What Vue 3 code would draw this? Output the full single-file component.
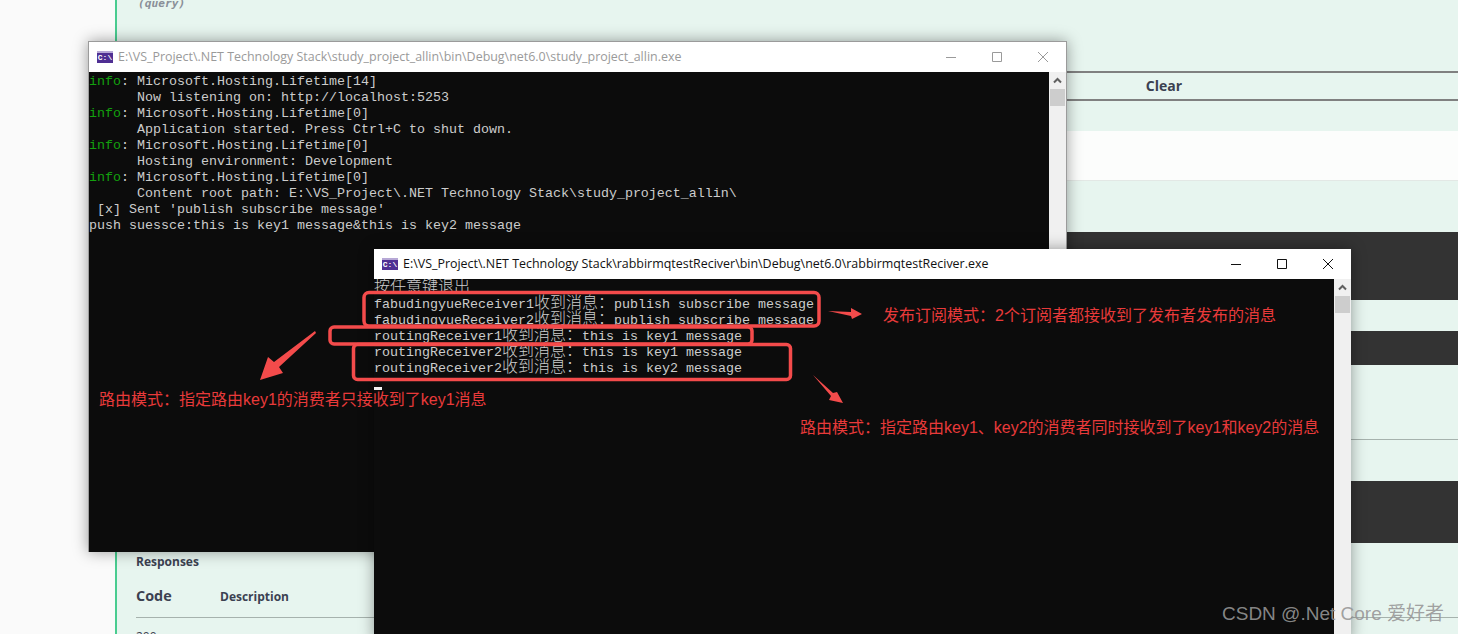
<script setup>
const splitLine = (text) =>
  text.split(/([\u3000-\u9fff\uff00-\uffef]+)/).filter(Boolean).map((t) => ({
    t,
    cjk: /[\u3000-\u9fff\uff00-\uffef]/.test(t),
  }));

const windows = [
  {
    id: 'one',
    active: false,
    title: 'E:\\VS_Project\\.NET Technology Stack\\study_project_allin\\bin\\Debug\\net6.0\\study_project_allin.exe',
    cursor: false,
    lines: [
      ['info', ': Microsoft.Hosting.Lifetime[14]'],
      ['', '      Now listening on: http://localhost:5253'],
      ['info', ': Microsoft.Hosting.Lifetime[0]'],
      ['', '      Application started. Press Ctrl+C to shut down.'],
      ['info', ': Microsoft.Hosting.Lifetime[0]'],
      ['', '      Hosting environment: Development'],
      ['info', ': Microsoft.Hosting.Lifetime[0]'],
      ['', '      Content root path: E:\\VS_Project\\.NET Technology Stack\\study_project_allin\\'],
      ['', " [x] Sent 'publish subscribe message'"],
      ['', 'push suessce:this is key1 message&this is key2 message'],
    ],
  },
  {
    id: 'two',
    active: true,
    title: 'E:\\VS_Project\\.NET Technology Stack\\rabbirmqtestReciver\\bin\\Debug\\net6.0\\rabbirmqtestReciver.exe',
    cursor: true,
    lines: [
      ['', '按任意键退出'],
      ['', 'fabudingyueReceiver1收到消息：publish subscribe message'],
      ['', 'fabudingyueReceiver2收到消息：publish subscribe message'],
      ['', 'routingReceiver1收到消息：this is key1 message'],
      ['', 'routingReceiver2收到消息：this is key1 message'],
      ['', 'routingReceiver2收到消息：this is key2 message'],
    ],
  },
].map((w) => ({
  ...w,
  lines: w.lines.map(([tag, text]) => ({ tag, parts: splitLine(text) })),
}));

const notes = [
  { id: 'a', text: '发布订阅模式：2个订阅者都接收到了发布者发布的消息' },
  { id: 'b', text: '路由模式：指定路由key1的消费者只接收到了key1消息' },
  { id: 'c', text: '路由模式：指定路由key1、key2的消费者同时接收到了key1和key2的消息' },
];
</script>

<template>
  <div class="page">
    <section class="panel">
      <div class="query-row"><span class="query">(query)</span></div>
      <div class="actions"><span class="clear">Clear</span></div>
      <div class="white-band"></div>
      <div class="dark dark-a"></div>
      <div class="dark dark-b"></div>
      <div class="rule rule-a"></div>
      <div class="dark dark-c"></div>
      <h4 class="responses">Responses</h4>
      <div class="table-head">
        <span class="code">Code</span>
        <span class="desc">Description</span>
      </div>
      <div class="status">200</div>
    </section>

    <div v-for="w in windows" :key="w.id" class="win" :class="[w.id, { active: w.active }]">
      <header class="titlebar">
        <span class="app-icon">C:\</span>
        <span class="title">{{ w.title }}</span>
        <span class="controls">
          <svg width="10" height="10" viewBox="0 0 10 10"><path d="M0 5.5H10" /></svg>
          <svg width="10" height="10" viewBox="0 0 10 10"><path d="M.5.5H9.5V9.5H.5Z" /></svg>
          <svg width="10" height="10" viewBox="0 0 10 10"><path d="M0 0L10 10M10 0L0 10" /></svg>
        </span>
      </header>
      <div class="body">
        <div class="console">
          <div v-for="(line, i) in w.lines" :key="i" class="line">
            <span v-if="line.tag" class="tag">{{ line.tag }}</span><span
              v-for="(p, j) in line.parts" :key="j" :class="{ cjk: p.cjk }">{{ p.t }}</span>
          </div>
          <div v-if="w.cursor" class="line"><span class="cursor"></span></div>
        </div>
        <div class="scrollbar">
          <svg class="chev" width="17" height="17" viewBox="0 0 17 17"><path d="M5 10.5L8.5 7L12 10.5" /></svg>
          <div class="thumb"></div>
        </div>
      </div>
    </div>

    <svg class="marks" width="1458" height="634" viewBox="0 0 1458 634">
      <g fill="none" stroke="#f44b4b" stroke-width="3.5">
        <rect x="364" y="292.5" width="455" height="33.5" rx="5" />
        <rect x="330" y="327" width="422" height="17" rx="4" />
        <rect x="353.5" y="344.5" width="437" height="35" rx="4" />
      </g>
      <g fill="#f44b4b">
        <path d="M315 331L316 333L279 367L283 373L260 380L268 357L274 362Z" />
        <path d="M828 311L851 312L851 308L862 314L852 319L851 316Z" />
        <path d="M813 375L833 393L837 392L843 403L829 400L831 396Z" />
      </g>
    </svg>

    <span v-for="n in notes" :key="n.id" class="note" :class="n.id">{{ n.text }}</span>
    <span class="watermark">CSDN @.Net Core 爱好者</span>
  </div>
</template>

<style scoped>
.page {
  position: relative;
  width: 1458px;
  height: 634px;
  overflow: hidden;
  background: #fafafa;
  font-family: "Open Sans", "Noto Sans CJK SC", sans-serif;
}

/* Page behind the windows */
.panel {
  margin-left: 115px;
  height: 634px;
  box-sizing: border-box;
  border-left: 2px solid #49cc90;
  background: #e7f5ef;
  color: #3b4151;
  overflow: hidden;
}
.query-row {
  display: flow-root;
  height: 71px;
  padding-left: 21px;
}
.query {
  display: block;
  margin-top: -2px;
  font: italic 700 11.2px/12px "DejaVu Sans Mono", monospace;
  color: #8a8f98;
}
.actions {
  box-sizing: border-box;
  height: 30px;
  padding-bottom: 2px;
  border-top: 2px solid #808080;
  border-bottom: 2px solid #808080;
  display: flex;
  justify-content: flex-end;
  align-items: center;
}
.clear {
  width: 588px;
  text-align: center;
  font-size: 14px;
  font-weight: 700;
}
.white-band {
  box-sizing: border-box;
  height: 50px;
  margin-top: 30px;
  background: #fcfdfc;
  border-bottom: 1px solid #e3e8e5;
}
.dark { background: #333; margin-left: 19px; }
.dark-a { height: 68px; margin-top: 51px; }
.dark-b { height: 34px; margin-top: 31px; }
.rule { height: 1px; background: #a6b2ad; margin-left: 19px; }
.rule-a { margin-top: 74px; }
.dark-c { height: 62px; margin-top: 41px; }
.responses {
  margin: 11px 0 0 19px;
  font-size: 12px;
  line-height: 16px;
  font-weight: 700;
}
.table-head {
  box-sizing: border-box;
  height: 48px;
  margin-left: 19px;
  padding-top: 16px;
  border-bottom: 1px solid #a6b2ad;
  display: flex;
  align-items: flex-start;
  font-weight: 700;
}
.code { width: 84px; font-size: 14.4px; line-height: 20px; }
.desc { font-size: 12px; line-height: 22px; }
.status {
  margin: 11px 0 0 19px;
  font-size: 12px;
  line-height: 16px;
}

/* Console windows */
.win {
  position: absolute;
  box-sizing: border-box;
  display: flex;
  flex-direction: column;
  box-shadow: 0 0 14px rgba(0, 0, 0, .38);
}
.win.one {
  left: 88px;
  top: 41px;
  width: 979px;
  height: 511px;
  border: 1px solid #9b9b9b;
  border-bottom: 0;
}
.win.two {
  left: 374px;
  top: 249px;
  width: 977px;
  height: 392px;
}
.titlebar {
  flex: none;
  height: 30px;
  background: #fff;
  display: flex;
  align-items: center;
  padding-left: 8px;
  color: #9a9a9a;
}
.two .titlebar { color: #111; }
.app-icon {
  width: 16px;
  height: 12px;
  flex: none;
  box-sizing: border-box;
  border-top: 2px solid #b7a8d6;
  background: #4f2f93;
  color: #fff;
  font: 700 8px/10px "Liberation Mono", monospace;
  text-align: center;
  overflow: hidden;
}
.title {
  margin-left: 5px;
  font-size: 12.45px;
  line-height: 16px;
  white-space: nowrap;
}
.controls {
  margin-left: auto;
  display: flex;
  align-items: center;
  gap: 36px;
  padding-right: 18px;
}
.controls svg { display: block; fill: none; stroke: #9a9a9a; stroke-width: 1; }
.two .controls svg { stroke: #111; }
.body {
  flex: 1;
  min-height: 0;
  display: flex;
}
.console {
  flex: 1;
  min-width: 0;
  padding-top: 1px;
  background: #0c0c0c;
  color: #ccc;
  font-family: "Liberation Mono", monospace;
  font-size: 13.33px;
  overflow: hidden;
}
.line {
  height: 16px;
  line-height: 18px;
  white-space: pre;
  position: relative;
}
.tag { color: #13a10e; }
.cjk {
  font-family: "Noto Sans CJK SC", sans-serif;
  font-size: 16px;
  line-height: 0;
  font-weight: 300;
}
.cursor {
  position: absolute;
  left: 0;
  top: 11px;
  width: 8px;
  height: 3px;
  background: #f2f2f2;
}
.scrollbar {
  flex: none;
  width: 17px;
  background: #f0f0f0;
}
.chev {
  display: block;
  fill: none;
  stroke: #606060;
  stroke-width: 2;
}
.thumb {
  height: 17px;
  margin: 0 1px;
  background: #cdcdcd;
}

/* Annotations over the windows */
.marks {
  position: absolute;
  left: 0;
  top: 0;
  pointer-events: none;
}
.note {
  position: absolute;
  font-family: "Liberation Sans", "Noto Sans CJK SC", sans-serif;
  font-size: 16px;
  line-height: 20px;
  white-space: nowrap;
  color: #e83a3a;
}
.note.a { left: 883px; top: 306px; }
.note.b { left: 99px; top: 390px; }
.note.c { left: 800px; top: 418px; }
.watermark {
  position: absolute;
  left: 1222px;
  top: 603px;
  font-family: "Liberation Sans", "Noto Sans CJK SC", sans-serif;
  font-size: 19px;
  line-height: 22px;
  white-space: nowrap;
  color: rgba(150, 150, 150, .9);
}
</style>

<style>
html, body { margin: 0; padding: 0; }
</style>
